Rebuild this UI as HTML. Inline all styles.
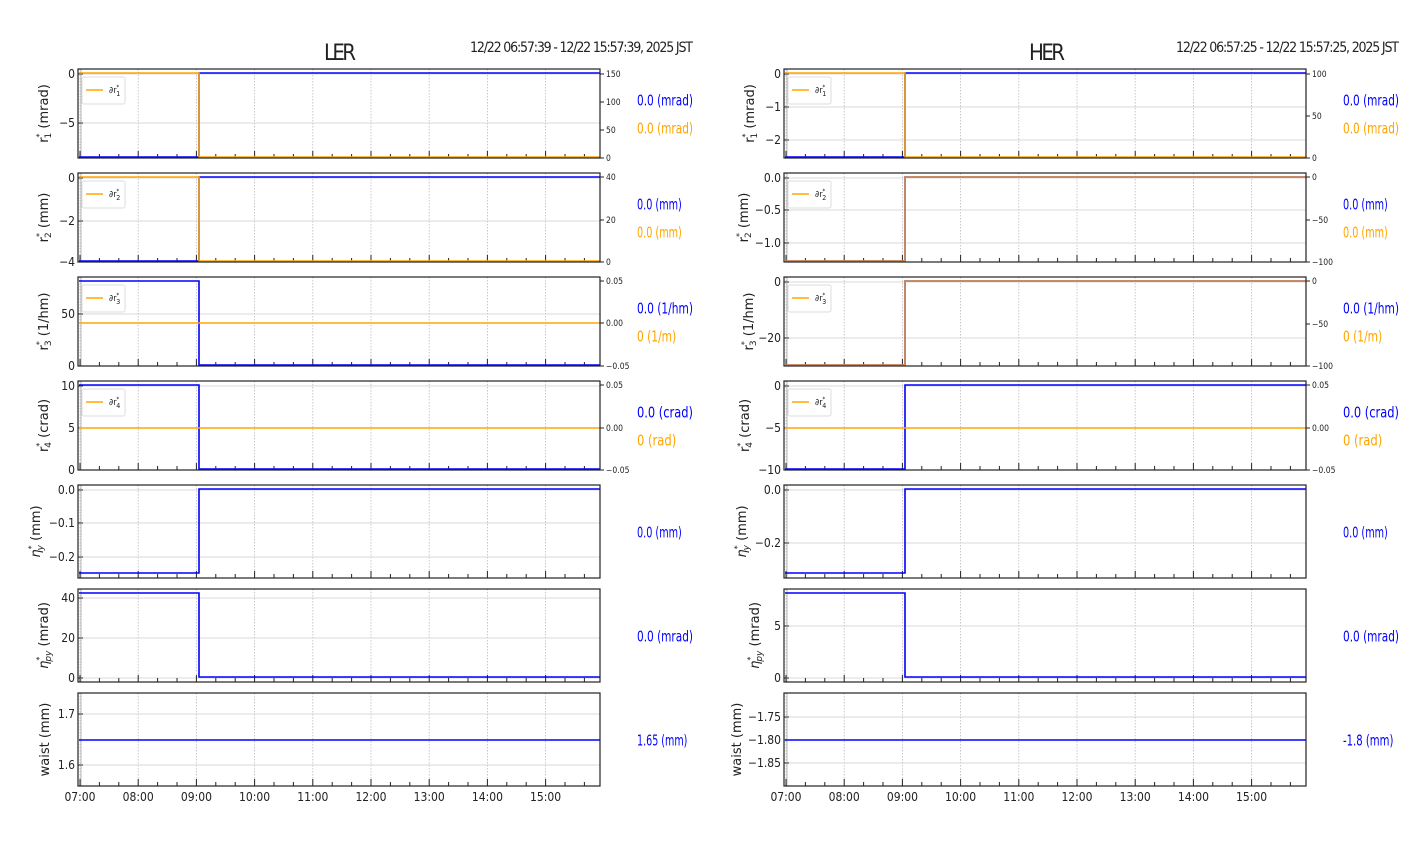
<!DOCTYPE html>
<html><head><meta charset="utf-8"><style>
html,body{margin:0;padding:0;background:#fff;width:1412px;height:864px;overflow:hidden}
svg text{font-family:"DejaVu Sans Condensed","Liberation Sans Narrow","Liberation Sans",sans-serif;fill:#222}
svg text.yl{font-family:"DejaVu Sans","Liberation Sans",sans-serif}
</style></head><body>
<svg id="s" width="1412" height="864" xmlns="http://www.w3.org/2000/svg">
<text x="340" y="60" font-size="22" text-anchor="middle" textLength="32">LER</text>
<text x="470" y="52" font-size="14" textLength="223">12/22 06:57:39 - 12/22 15:57:39, 2025 JST</text>
<text x="1047" y="60" font-size="22" text-anchor="middle" textLength="36">HER</text>
<text x="1176" y="52" font-size="14" textLength="223">12/22 06:57:25 - 12/22 15:57:25, 2025 JST</text>
</svg>
<script>
var S=document.getElementById('s'),NS='http://www.w3.org/2000/svg';
function el(t,a,txt){var e=document.createElementNS(NS,t);for(var k in a)e.setAttribute(k,a[k]);if(txt!==undefined)e.textContent=txt;S.appendChild(e);return e;}
function line(x1,y1,x2,y2,c,w,d){var a={x1:x1,y1:y1,x2:x2,y2:y2,stroke:c,'stroke-width':w};if(d)a['stroke-dasharray']=d;el('line',a);}
function poly(p,c,w){el('polyline',{points:p,fill:'none',stroke:c,'stroke-width':w});}
var rows=[[69,158],[173,262],[277,366],[381,470],[485,578],[589,682],[693,786]];
var B='#0000ff',O='#ffa500';
var ylab=[["r","1","(mrad)"],["r","2","(mm)"],["r","3","(1/hm)"],["r","4","(crad)"],["η","y","(mm)"],["η","py","(mrad)"],["waist","","(mm)"]];
var P=[
 {x0:78,yo:[30,30,30,30,38,30,29],
  yt:[[[74,"0"],[123,"−5"]],[[178,"0"],[221,"−2"],[262,"−4"]],[[314,"50"],[366,"0"]],[[386,"10"],[428,"5"],[470,"0"]],[[490,"0.0"],[523,"−0.1"],[557,"−0.2"]],[[598,"40"],[638,"20"],[678,"0"]],[[714,"1.7"],[765,"1.6"]]],
  rt:[[[74,"150"],[102,"100"],[130,"50"],[158,"0"]],[[177,"40"],[220,"20"],[262,"0"]],[[281,"0.05"],[323,"0.00"],[366,"−0.05"]],[[385,"0.05"],[428,"0.00"],[470,"−0.05"]]],
  blue:[[157,73],[261,177],[281,365],[385,469],[573,489],[593,677],[740,740]],
  orange:[[73,157],[177,261],323,428],
  lab:[["0.0 (mrad)","0.0 (mrad)"],["0.0 (mm)","0.0 (mm)"],["0.0 (1/hm)","0 (1/m)"],["0.0 (crad)","0 (rad)"],["0.0 (mm)"],["0.0 (mrad)"],["1.65 (mm)"]]},
 {x0:784,yo:[30,36,31,35,38,25,43],
  yt:[[[74,"0"],[107,"−1"],[140,"−2"]],[[178,"0.0"],[210,"−0.5"],[243,"−1.0"]],[[282,"0"],[338,"−20"]],[[386,"0"],[428,"−5"],[470,"−10"]],[[490,"0.0"],[543,"−0.2"]],[[626,"5"],[678,"0"]],[[717,"−1.75"],[740,"−1.80"],[763,"−1.85"]]],
  rt:[[[74,"100"],[116,"50"],[158,"0"]],[[177,"0"],[220,"−50"],[262,"−100"]],[[281,"0"],[324,"−50"],[366,"−100"]],[[385,"0.05"],[428,"0.00"],[470,"−0.05"]]],
  blue:[[157,73],[261,177],[365,281],[469,385],[573,489],[593,677],[740,740]],
  orange:[[73,157],[261,177],[365,281],428],
  lab:[["0.0 (mrad)","0.0 (mrad)"],["0.0 (mm)","0.0 (mm)"],["0.0 (1/hm)","0 (1/m)"],["0.0 (crad)","0 (rad)"],["0.0 (mm)"],["0.0 (mrad)"],["-1.8 (mm)"]]}
];
function vt(x,y,s,c){el('text',{x:x,y:y,'font-size':15.5,style:'fill:'+c,textLength:(s.length*5.6).toFixed(1),lengthAdjust:'spacingAndGlyphs'},s);}
P.forEach(function(p){
 var x0=p.x0,x1=x0+522,st=x0+121;
 rows.forEach(function(r,i){
  var t=r[0],b=r[1];
  for(var h=0;h<9;h++){var gx=x0+2+h*58.2;line(gx,t,gx,b,'#bbb',0.8,'1.5,1.5');}
  p.yt[i].forEach(function(y){line(x0,y[0],x1,y[0],'#ccc',0.8);line(x0,y[0],x0+5,y[0],'#222',1);el('text',{x:x0-3,y:y[0]+4,'font-size':12,'text-anchor':'end'},y[1]);});
  for(var m=0;m<27;m++){var mx=x0+2+m*19.4;var major=(m%3==0);line(mx,b,mx,b-(major?7:4),'#222',1);}
  line(x0+3,t,x0+3,b,'#888',0.6);
  var bl=p.blue[i];
  poly(x0+1+','+bl[0]+' '+st+','+bl[0]+' '+st+','+bl[1]+' '+x1+','+bl[1],B,1.6);
  if(i<4){var o=p.orange[i];var oc=(Array.isArray(o)&&o[0]===bl[0])?'#e0913a':O;
   if(Array.isArray(o))poly(x0+1+','+o[0]+' '+st+','+o[0]+' '+st+','+o[1]+' '+x1+','+o[1],oc,1.5);
   else line(x0+1,o,x1,o,O,1.5);
   p.rt[i].forEach(function(y){line(x1,y[0],x1+4,y[0],'#222',1);el('text',{x:x1+6,y:y[0]+3,'font-size':8.5},y[1]);});
   el('rect',{x:x0+4,y:t+8,width:43,height:27,rx:2,fill:'#fff',stroke:'#ddd','stroke-width':1});
   line(x0+8,t+21,x0+25,t+21,O,1.5);
   var tx=el('text',{x:x0+31,y:t+24,'font-size':9});
   tx.innerHTML='∂r<tspan font-size="6" dy="-4">*</tspan><tspan font-size="7" dx="-3" dy="7">'+(i+1)+'</tspan>';
  }
  el('rect',{x:x0,y:t,width:522,height:b-t,fill:'none',stroke:'#222','stroke-width':1.2});
  var cy=(t+b)/2,L=ylab[i];
  var g=el('text',{'class':'yl',x:0,y:0,'font-size':13,'text-anchor':'middle',transform:'translate('+(x0-p.yo[i])+','+cy+') rotate(-90)'});
  if(i<6){var it=(i>=4)?' font-style="italic"':'';g.innerHTML='<tspan'+it+'>'+L[0]+'</tspan><tspan font-size="8" dy="-6">*</tspan><tspan font-size="9" dx="-5" dy="9"'+it+'>'+L[1]+'</tspan><tspan dy="-3"> '+L[2]+'</tspan>';}
  else g.textContent='waist (mm)';
  var lab=p.lab[i],lx=x0+559;
  if(lab.length==2){vt(lx,cy-8,lab[0],'#0000ff');vt(lx,cy+20,lab[1],'#ffa500');}
  else vt(lx,cy+6,lab[0],'#0000ff');
 });
 ['07:00','08:00','09:00','10:00','11:00','12:00','13:00','14:00','15:00'].forEach(function(s,h){el('text',{x:x0+2+h*58.2,y:801,'font-size':12,'text-anchor':'middle'},s);});
});
</script>
</body></html>
